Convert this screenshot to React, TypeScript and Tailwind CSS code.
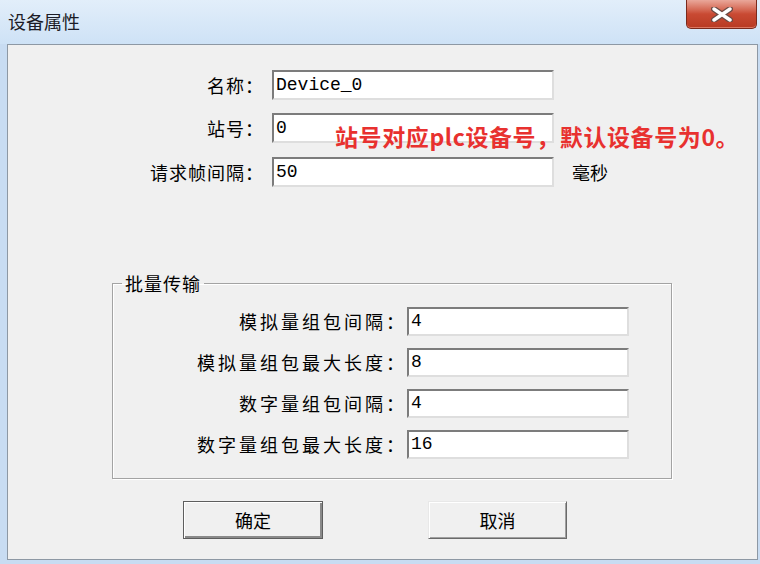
import React from "react";

const CJK = "font-['Noto_Sans_CJK_SC','Noto_Sans',sans-serif]";
const MONO = "font-['Liberation_Mono','DejaVu_Sans_Mono',monospace]";

function TextBox({ value, w, h = 30 }: { value: string; w: number; h?: number }) {
  return (
    <div
      className={`flex items-center bg-white border-2 border-t-[#7c7c7c] border-l-[#7c7c7c] border-b-[#dedede] border-r-[#dedede] pl-[2px] text-[18px] text-black ${MONO}`}
      style={{ width: w, height: h }}
    >
      {value}
    </div>
  );
}

function CloseButton() {
  return (
    <div className="mr-[3px] flex h-[29px] w-[71px] items-center justify-center rounded-b-[5px] border border-t-0 border-[#7a2a1c] bg-gradient-to-b from-[#e9a79a] via-[#c94a33] to-[#b83a22] shadow-[inset_0_-1px_0_rgba(255,180,160,0.5)]">
      <svg width="22" height="15" viewBox="0 0 22 15">
        <path d="M3 2 L19 13 M19 2 L3 13" stroke="#6a4a44" strokeWidth="6" strokeLinecap="round" />
        <path d="M3 2 L19 13 M19 2 L3 13" stroke="#ffffff" strokeWidth="3.4" strokeLinecap="round" />
      </svg>
    </div>
  );
}

function Button({ label, primary }: { label: string; primary?: boolean }) {
  return (
    <div
      className={`flex h-[38px] items-center justify-center bg-[#f0f0f0] text-[18px] text-black ${CJK} ${
        primary
          ? "w-[140px] border border-[#5e5e5e] shadow-[inset_1px_1px_0_#ffffff,inset_-2px_-2px_0_#8a8a8a]"
          : "w-[139px] border border-t-[#e8e8e8] border-l-[#e8e8e8] border-b-[#6a6a6a] border-r-[#6a6a6a] shadow-[inset_1px_1px_0_#ffffff,inset_-1px_-1px_0_#a0a0a0]"
      }`}
    >
      {label}
    </div>
  );
}

const batch = [
  { label: "模拟量组包间隔：", value: "4" },
  { label: "模拟量组包最大长度：", value: "8" },
  { label: "数字量组包间隔：", value: "4" },
  { label: "数字量组包最大长度：", value: "16" },
];

export default function App() {
  return (
    <div className={`flex h-[564px] w-[760px] flex-col overflow-hidden bg-[#c8dcf2] ${CJK}`}>
      {/* Title bar */}
      <div className="flex h-[44px] items-start justify-between bg-gradient-to-b from-[#e2eefa] to-[#cee2f6]">
        <span className="ml-[8px] mt-[9px] text-[18px] leading-[24px] text-[#1b1b26]">设备属性</span>
        <CloseButton />
      </div>

      <div className="flex flex-1 pb-[4px] pl-[7px] pr-[2px]">
        <div className="flex flex-1 flex-col border border-[#8d98a4] bg-[#f0f0f0] text-[18px] text-black">
          {/* Top fields */}
          <div className="mt-[25px] flex h-[30px] items-center">
            <span className="ml-[100px] w-[156px] text-right tracking-[1px]">名称：</span>
            <div className="ml-[8px]">
              <TextBox value="Device_0" w={282} />
            </div>
          </div>
          <div className="relative mt-[13px] flex h-[30px] items-center">
            <span className="ml-[100px] w-[156px] text-right tracking-[1px]">站号：</span>
            <div className="ml-[8px]">
              <TextBox value="0" w={282} />
            </div>
            <span className="absolute left-[327px] top-[12px] whitespace-nowrap text-[23px] font-bold leading-[23px] tracking-[0.6px] text-[#e8312f]">
              站号对应plc设备号，默认设备号为0。
            </span>
          </div>
          <div className="mt-[14px] flex h-[30px] items-center">
            <span className="ml-[100px] w-[156px] text-right tracking-[1px]">请求帧间隔：</span>
            <div className="ml-[8px]">
              <TextBox value="50" w={282} />
            </div>
            <span className="ml-[18px]">毫秒</span>
          </div>

          {/* Batch group */}
          <fieldset className="ml-[104px] mt-[84px] h-[208px] w-[560px] border border-[#a3a3a3] pl-[9px] pr-[9px] shadow-[inset_1px_1px_0_#ffffff,1px_1px_0_#ffffff]">
            <legend className="px-[3px] leading-[24px] tracking-[1px]">批量传输</legend>
            <div className="mt-[12px] flex flex-col gap-[12px]">
              {batch.map((row) => (
                <div key={row.label} className="flex h-[29px] items-center">
                  <span className="w-[285px] text-right tracking-[3px]">{row.label}</span>
                  <TextBox value={row.value} w={222} h={29} />
                </div>
              ))}
            </div>
          </fieldset>

          {/* Buttons */}
          <div className="ml-[175px] mt-[22px] flex gap-[105px]">
            <Button label="确定" primary />
            <Button label="取消" />
          </div>
        </div>
      </div>
    </div>
  );
}
